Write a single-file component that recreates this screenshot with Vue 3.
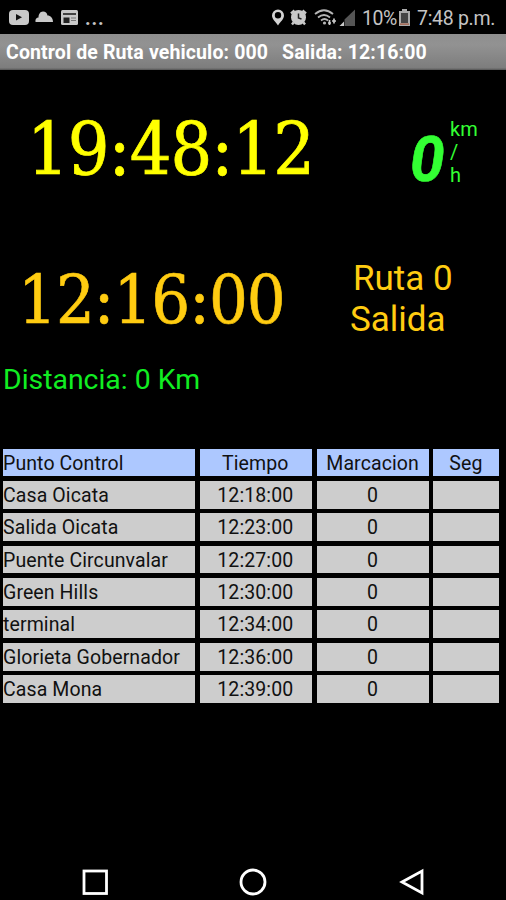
<script setup>
import { ref } from "vue";

const vehiculo = ref("000");
const horaSalida = ref("12:16:00");
const reloj = ref("19:48:12");
const velocidad = ref(0);
const ruta = ref(0);
const distancia = ref(0);

const puntos = ref([
  { nombre: "Casa Oicata", tiempo: "12:18:00", marcacion: 0, seg: "" },
  { nombre: "Salida Oicata", tiempo: "12:23:00", marcacion: 0, seg: "" },
  { nombre: "Puente Circunvalar", tiempo: "12:27:00", marcacion: 0, seg: "" },
  { nombre: "Green Hills", tiempo: "12:30:00", marcacion: 0, seg: "" },
  { nombre: "terminal", tiempo: "12:34:00", marcacion: 0, seg: "" },
  { nombre: "Glorieta Gobernador", tiempo: "12:36:00", marcacion: 0, seg: "" },
  { nombre: "Casa Mona", tiempo: "12:39:00", marcacion: 0, seg: "" },
]);
</script>

<template>
  <main>
    <div class="status">
      <svg class="left-icons" width="100" height="34" viewBox="0 0 100 34">
        <rect x="9" y="10" width="20" height="15" rx="4" fill="#c9c9c9" />
        <path d="M16 14v6.500l6-3.200z" fill="#111" />
        <path
          d="M35.500 22c-.5-3 1-4.500 3-4.500c0-3 1.500-6 4.500-6c2.500 0 4 1.500 4.500 4c3 0 5.500 2.500 5.500 6.500z"
          fill="#c9c9c9"
        />
        <rect x="61" y="10" width="17" height="15" rx="1.500" fill="#c9c9c9" />
        <path d="M63 14h13" stroke="#222" stroke-width="1.600" />
        <rect x="63.500" y="17.500" width="6" height="5.500" fill="#222" />
        <path d="M71 18h5M71 20.500h5" stroke="#777" stroke-width="1.200" />
      </svg>
      <span class="more">...</span>
      <svg class="right-icons" width="88" height="34" viewBox="0 0 88 34">
        <path
          d="M8 25.500c-2.500-4-6-6.300-6-10a6 6 0 0 1 12 0c0 3.700-3.500 6-6 10zM8 12a3.200 3.200 0 1 0 0 6.400a3.200 3.200 0 1 0 0-6.400z"
          fill="#d2d2d2"
          fill-rule="evenodd"
        />
        <circle cx="28.500" cy="17.500" r="7.500" fill="#c9c9c9" />
        <path d="M21 13.500l3.500-3M36 13.500l-3.500-3M23.500 22.500l-1.500 2M33.500 22.500l1.500 2" stroke="#c9c9c9" stroke-width="2.400" />
        <path d="M28.500 13.500v4.500l3 1" stroke="#222" stroke-width="1.500" fill="none" />
        <g fill="none" stroke="#b5b5b5" stroke-width="1.800">
          <path d="M45 14q9-7.500 18 0" />
          <path d="M48 17.500q6-5 12 0" />
          <path d="M51 20.500q3.500-3 7 0" />
        </g>
        <circle cx="54.500" cy="23" r="1.600" fill="#b5b5b5" />
        <path d="M59.500 20v5M58 23h3M64 18.500v5M62 21h4" stroke="#c9c9c9" stroke-width="1.700" />
        <path d="M74 26v-4.500l-4.500 4.500z" fill="#c9c9c9" />
        <path d="M74.500 26v-6.500l10.500-10v16.500z" fill="#555" />
      </svg>
      <span class="percent">10%</span>
      <svg class="battery" width="13" height="34" viewBox="0 0 13 34">
        <path d="M4 9h5v2h3v15h-11v-15h3z" fill="#aaa" />
        <rect x="3" y="13" width="7" height="10" fill="#444" />
        <rect x="2" y="23.500" width="9" height="1.200" fill="#a4563c" />
      </svg>
      <span class="hour">7:48 p.m.</span>
    </div>
    <header>
      <span>Control de Ruta vehiculo: {{ vehiculo }}</span>
      <span>Salida: {{ horaSalida }}</span>
    </header>
    <section class="now">
      <div class="clock">{{ reloj }}</div>
      <div class="speed">
        <span class="value">{{ velocidad }}</span>
        <div class="unit">
          <span>km</span>
          <span>/</span>
          <span>h</span>
        </div>
      </div>
    </section>
    <section class="next">
      <div class="clock">{{ horaSalida }}</div>
      <div class="route">
        <p class="number">Ruta {{ ruta }}</p>
        <p class="place">Salida</p>
      </div>
    </section>
    <p class="distance">Distancia: {{ distancia }} Km</p>
    <div class="grid">
      <div class="row head">
        <div>Punto Control</div>
        <div>Tiempo</div>
        <div>Marcacion</div>
        <div>Seg</div>
      </div>
      <div class="row" v-for="punto in puntos" :key="punto.nombre">
        <div>{{ punto.nombre }}</div>
        <div>{{ punto.tiempo }}</div>
        <div>{{ punto.marcacion }}</div>
        <div>{{ punto.seg }}</div>
      </div>
    </div>
    <nav>
      <svg width="30" height="30" viewBox="0 0 30 30">
        <rect x="4" y="4" width="22.500" height="22.500" />
      </svg>
      <svg width="30" height="30" viewBox="0 0 30 30">
        <circle cx="15" cy="15" r="12" />
      </svg>
      <svg width="30" height="30" viewBox="0 0 30 30">
        <path d="M6 15l20-11v22z" />
      </svg>
    </nav>
  </main>
</template>

<style>
body {
  margin: 0;
  background: #000;
}
</style>

<style scoped>
main {
  width: 506px;
  height: 900px;
  background: #000;
  font-family: Roboto, "Liberation Sans", sans-serif;
  display: flex;
  flex-direction: column;
  overflow: hidden;
}
p {
  margin: 0;
}
span {
  white-space: nowrap;
}
.status {
  height: 34px;
  flex: none;
  display: flex;
  color: #c4c4c4;
  font-size: 19.5px;
  line-height: 37px;
}
.left-icons {
  margin-right: -15px;
}
.more {
  width: 185px;
  letter-spacing: 0.8px;
  font-weight: bold;
}
.right-icons {
  flex: none;
}
.percent {
  width: 36px;
  margin-left: 4px;
  letter-spacing: -0.5px;
}
.battery {
  flex: none;
  margin-right: 5px;
}
.hour {
  padding-left: 1px;
  letter-spacing: -0.3px;
}
header {
  box-sizing: border-box;
  height: 36px;
  flex: none;
  padding-left: 6px;
  display: flex;
  gap: 14px;
  background: linear-gradient(#8e8e8e, #929292 30%, #7d7d7d 94%, #555);
  color: #fff;
  font-size: 19.5px;
  font-weight: bold;
  line-height: 37px;
  letter-spacing: 0.13px;
}
.clock {
  font-family: "DejaVu Serif Condensed", "DejaVu Serif", serif;
  font-stretch: condensed;
  white-space: nowrap;
}
.now {
  height: 160px;
  flex: none;
  display: flex;
  color: #ff0;
}
.now .clock {
  width: 383px;
  padding-left: 27px;
  font-size: 73px;
  line-height: 160px;
  letter-spacing: -1px;
  -webkit-text-stroke: 0.7px #ff0;
}
.speed {
  display: flex;
  color: #3f3;
}
.value {
  width: 40px;
  font-size: 62px;
  font-weight: bold;
  font-style: italic;
  line-height: 180px;
  -webkit-text-stroke: 0.6px #3f3;
}
.unit {
  padding-top: 48px;
  display: flex;
  flex-direction: column;
  font-size: 20px;
  line-height: 23px;
}
.next {
  height: 130px;
  flex: none;
  display: flex;
  color: #fc1;
}
.next .clock {
  width: 332px;
  padding-left: 18px;
  font-size: 68px;
  line-height: 139px;
  letter-spacing: -1px;
  -webkit-text-stroke: 0.6px #fc1;
}
.route {
  padding-top: 28px;
  font-size: 35px;
  line-height: 41px;
}
.number {
  padding-left: 3px;
}
.distance {
  height: 88.5px;
  flex: none;
  padding-left: 3px;
  color: #1e2;
  font-size: 28.4px;
  line-height: 39px;
}
.grid {
  width: 497px;
  margin-left: 2.5px;
  display: flex;
  flex-direction: column;
  gap: 4.6px;
}
.row {
  display: grid;
  grid-template-columns: 192.5px 112px 112px 66px;
  gap: 4.8px;
}
.row div {
  height: 27.8px;
  background: #cdcdcd;
  color: #111;
  font-size: 19.5px;
  line-height: 30.5px;
  text-align: center;
  letter-spacing: 0.1px;
  white-space: nowrap;
}
.row div:first-child {
  text-align: left;
  text-indent: 0.5px;
}
.row div:nth-child(2) {
  text-indent: -1px;
}
.head div {
  background: #adc8ff;
}
.head div:last-child {
  text-indent: -1px;
}
nav {
  margin-top: auto;
  padding: 0 80px 3px;
  display: flex;
  justify-content: space-between;
}
nav svg {
  fill: none;
  stroke: #fff;
  stroke-width: 2.8;
}
</style>
